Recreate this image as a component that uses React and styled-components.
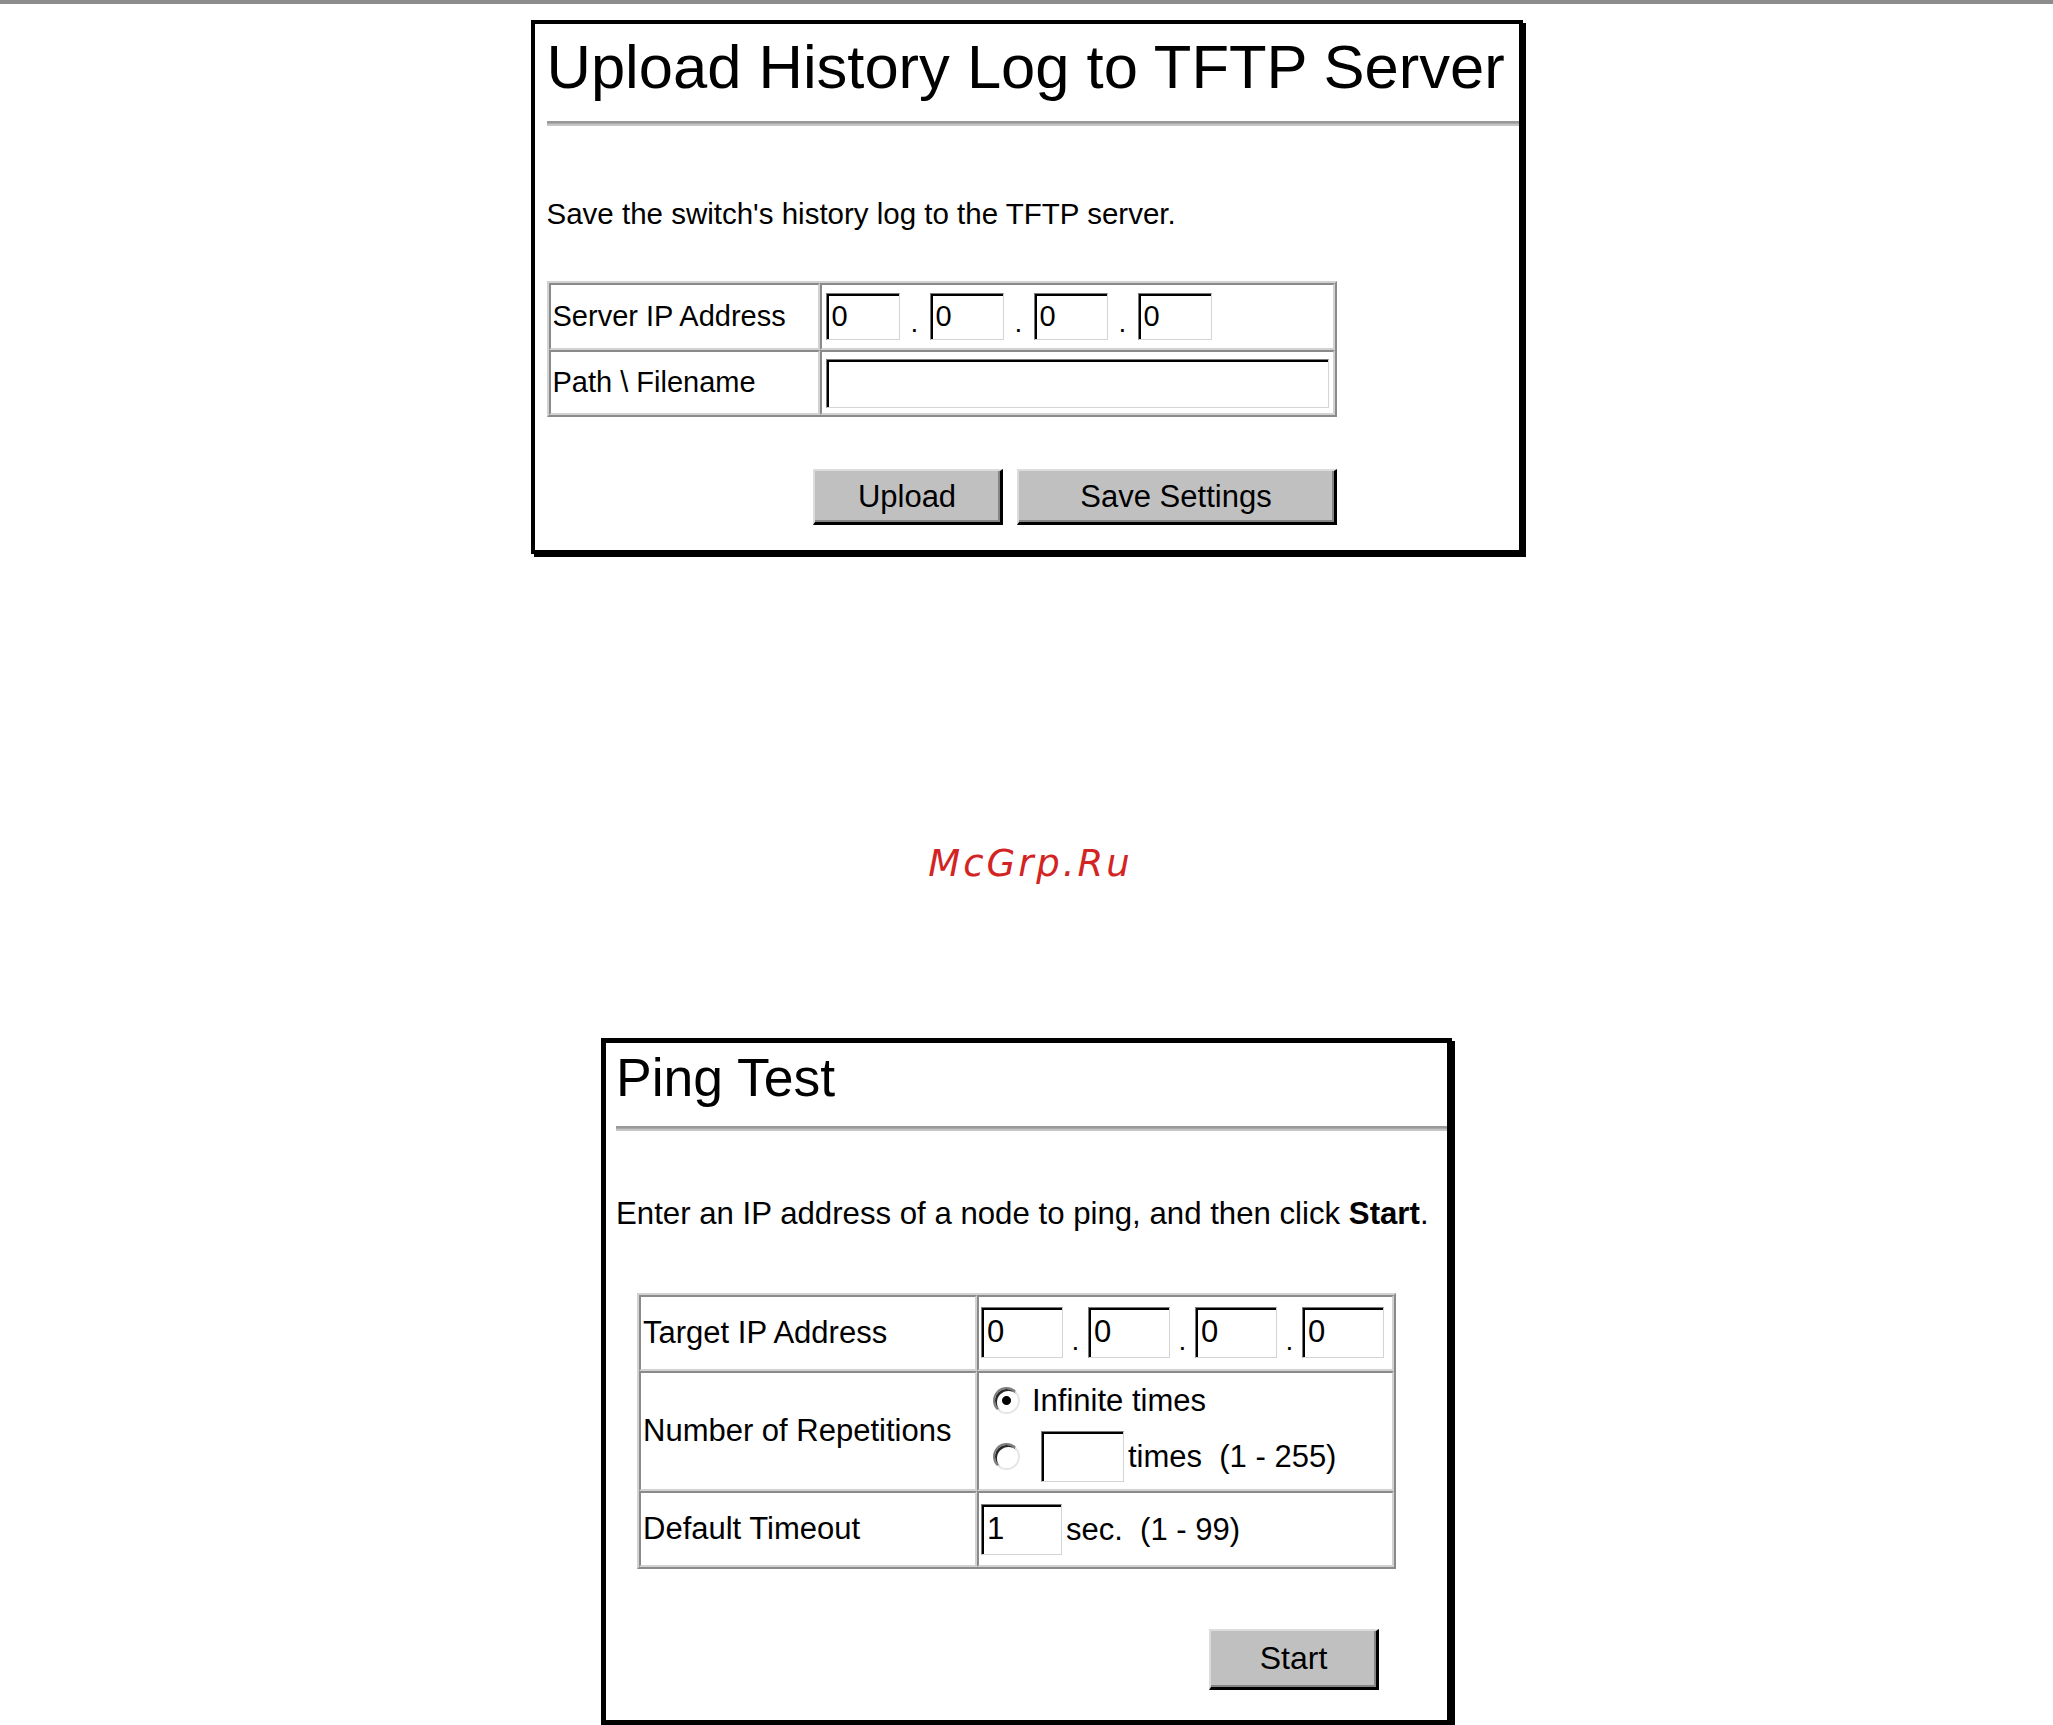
import React from "react";
import styled, { createGlobalStyle } from "styled-components";

const GlobalStyle = createGlobalStyle`
  * {
    box-sizing: border-box;
  }

  body {
    margin: 0;
    background: #fff;
    color: #000;
    font-family: "Liberation Sans", Arial, sans-serif;
  }
`

const Page = styled.div`
    display: flex;
    flex-direction: column;
    align-items: center;
`

const TopRule = styled.div`
    align-self: stretch;
    height: 4px;
    background: #8c8c8c;
`

const Panel = styled.section`
    display: flex;
    flex-direction: column;
    width: ${p => p.$w}px;
    margin-top: ${p => p.$top}px;
    padding: ${p => p.$pad};
    border: ${p => p.$bw}px solid #000;
    box-shadow: 3px 3px 0 #000;
    background: #fff;
`

const Title = styled.h1`
    margin: 0;
    font-size: ${p => p.$size}px;
    font-weight: normal;
    line-height: 1;
    white-space: nowrap;
`

const Rule = styled.div`
    height: 5px;
    margin-top: ${p => p.$top}px;
    border-top: 2px solid #999;
    border-bottom: 2px solid #c6c6c6;
    background: #aaa;
`

const Intro = styled.p`
    margin: ${p => p.$top}px 0 0;
    font-size: ${p => p.$size}px;
    line-height: 1;
    white-space: nowrap;
`

const FormTable = styled.table`
    width: ${p => p.$w}px;
    margin-top: ${p => p.$top}px;
    margin-left: ${p => p.$left}px;
    border-spacing: 0;
    border-collapse: separate;
    table-layout: fixed;
    border: 2px solid;
    border-color: #d2d2d2 #8a8a8a #8a8a8a #d2d2d2;
`

const LabelCell = styled.td`
    width: ${p => p.$w}px;
    padding: 0 0 0 2px;
    border: 2px solid;
    border-color: #8a8a8a #d2d2d2 #d2d2d2 #8a8a8a;
    font-size: ${p => p.$size}px;
    vertical-align: middle;
    white-space: nowrap;
`

const ValueCell = styled.td`
    padding: ${p => p.$pad};
    border: 2px solid;
    border-color: #8a8a8a #d2d2d2 #d2d2d2 #8a8a8a;
    font-size: ${p => p.$size}px;
    vertical-align: middle;
`

const IpRow = styled.div`
    display: flex;
    align-items: flex-end;
`

const Dot = styled.span`
    width: ${p => p.$w}px;
    margin-bottom: 3px;
    font-size: 28px;
    line-height: 1;
    text-align: center;
`

const Field = styled.input`
    display: block;
    width: ${p => p.$w}px;
    height: ${p => p.$h}px;
    margin: 0;
    padding: 0 0 0 5px;
    border: 1px solid;
    border-color: #7a7a7a #d4d4d4 #d4d4d4 #7a7a7a;
    box-shadow: inset 2px 2px 0 #000;
    background: #fff;
    color: #000;
    font-family: "Liberation Sans", Arial, sans-serif;
    font-size: ${p => p.$size}px;
    outline: none;
`

const OptionLine = styled.div`
    display: flex;
    align-items: center;
    gap: ${p => p.$gap}px;
    margin-top: ${p => p.$top || 0}px;
    padding-left: 14px;
    line-height: 1;
    white-space: pre;
`

const Radio = styled.input`
    appearance: none;
    flex: none;
    width: 27px;
    height: 27px;
    margin: 0;
    border: 2px solid;
    border-color: #7c7c7c #e6e6e6 #e6e6e6 #7c7c7c;
    border-radius: 50%;
    box-shadow: inset 2px 2px 0 #2a2a2a;
    background: #fff;

    &:checked {
        background: radial-gradient(circle, #000 0 4px, #fff 5px);
    }
`

const Inline = styled.div`
    display: flex;
    align-items: center;
    gap: 4px;
    white-space: pre;
    line-height: 1;
`

const ButtonRow = styled.div`
    display: flex;
    justify-content: flex-end;
    gap: 14px;
    width: ${p => (p.$w ? `${p.$w}px` : "auto")};
    margin-top: ${p => p.$top}px;
    padding-right: ${p => p.$pr || 0}px;
`

const Button = styled.button`
    width: ${p => p.$w}px;
    height: ${p => p.$h}px;
    padding: 0;
    border-style: solid;
    border-width: 2px 3px 3px 2px;
    border-color: #dcdcdc #000 #000 #dcdcdc;
    box-shadow: inset -2px -2px 0 #858585;
    background: #c0c0c0;
    color: #000;
    font-family: "Liberation Sans", Arial, sans-serif;
    font-size: ${p => p.$size}px;
`

const Watermark = styled.div`
    margin-top: 291px;
    margin-left: 8px;
    color: #d32424;
    font-family: "DejaVu Sans", sans-serif;
    font-style: oblique;
    font-size: 37px;
    letter-spacing: 3px;
    line-height: 1;
`

function IpFields({ w, h, size, gap }) {
    return (
        <IpRow>
            {[0, 1, 2, 3].map(i => (
                <React.Fragment key={i}>
                    {i > 0 && <Dot $w={gap}>.</Dot>}
                    <Field $w={w} $h={h} $size={size} defaultValue="0" />
                </React.Fragment>
            ))}
        </IpRow>
    )
}

function UploadPanel() {
    return (
        <Panel $w={992} $top={16} $bw={4} $pad="12px 0 25px 12px">
            <Title $size={61.5}>Upload History Log to TFTP Server</Title>
            <Rule $top={23} />
            <Intro $top={73} $size={29.5}>Save the switch's history log to the TFTP server.</Intro>
            <FormTable $w={790} $top={53} $left={0}>
                <tbody>
                    <tr>
                        <LabelCell $w={271} $size={29}>Server IP Address</LabelCell>
                        <ValueCell $pad="8px 0 8px 4px" $size={29}>
                            <IpFields w={74} h={47} size={29} gap={30} />
                        </ValueCell>
                    </tr>
                    <tr>
                        <LabelCell $w={271} $size={29}>Path \ Filename</LabelCell>
                        <ValueCell $pad="7px 0 5px 4px" $size={29}>
                            <Field $w={503} $h={49} $size={29} defaultValue="" />
                        </ValueCell>
                    </tr>
                </tbody>
            </FormTable>
            <ButtonRow $w={790} $top={52}>
                <Button $w={190} $h={56} $size={31}>Upload</Button>
                <Button $w={320} $h={56} $size={31}>Save Settings</Button>
            </ButtonRow>
        </Panel>
    )
}

function PingPanel() {
    return (
        <Panel $w={851} $top={156} $bw={5} $pad="8px 0 30px 10px">
            <Title $size={53.5}>Ping Test</Title>
            <Rule $top={21} />
            <Intro $top={67} $size={31.2}>
                Enter an IP address of a node to ping, and then click <b>Start</b>.
            </Intro>
            <FormTable $w={759} $top={64} $left={21}>
                <tbody>
                    <tr>
                        <LabelCell $w={338} $size={31}>Target IP Address</LabelCell>
                        <ValueCell $pad="10px 0 11px 2px" $size={31}>
                            <IpFields w={82} h={51} size={31} gap={25} />
                        </ValueCell>
                    </tr>
                    <tr>
                        <LabelCell $w={338} $size={31}>Number of Repetitions</LabelCell>
                        <ValueCell $pad="12px 0 7px 0" $size={31}>
                            <OptionLine $gap={12}>
                                <Radio type="radio" name="reps" defaultChecked />
                                <span>Infinite times</span>
                            </OptionLine>
                            <OptionLine $gap={21} $top={15}>
                                <Radio type="radio" name="reps" />
                                <Inline>
                                    <Field $w={83} $h={51} $size={31} defaultValue="" />
                                    <span>{"times  (1 - 255)"}</span>
                                </Inline>
                            </OptionLine>
                        </ValueCell>
                    </tr>
                    <tr>
                        <LabelCell $w={338} $size={31}>Default Timeout</LabelCell>
                        <ValueCell $pad="11px 0 10px 2px" $size={31}>
                            <Inline>
                                <Field $w={81} $h={51} $size={31} defaultValue="1" />
                                <span>{"sec.  (1 - 99)"}</span>
                            </Inline>
                        </ValueCell>
                    </tr>
                </tbody>
            </FormTable>
            <ButtonRow $top={60} $pr={68}>
                <Button $w={170} $h={61} $size={32}>Start</Button>
            </ButtonRow>
        </Panel>
    )
}

export default function App() {
    return (
        <>
            <GlobalStyle />
            <Page>
                <TopRule />
                <UploadPanel />
                <Watermark>McGrp.Ru</Watermark>
                <PingPanel />
            </Page>
        </>
    )
}
